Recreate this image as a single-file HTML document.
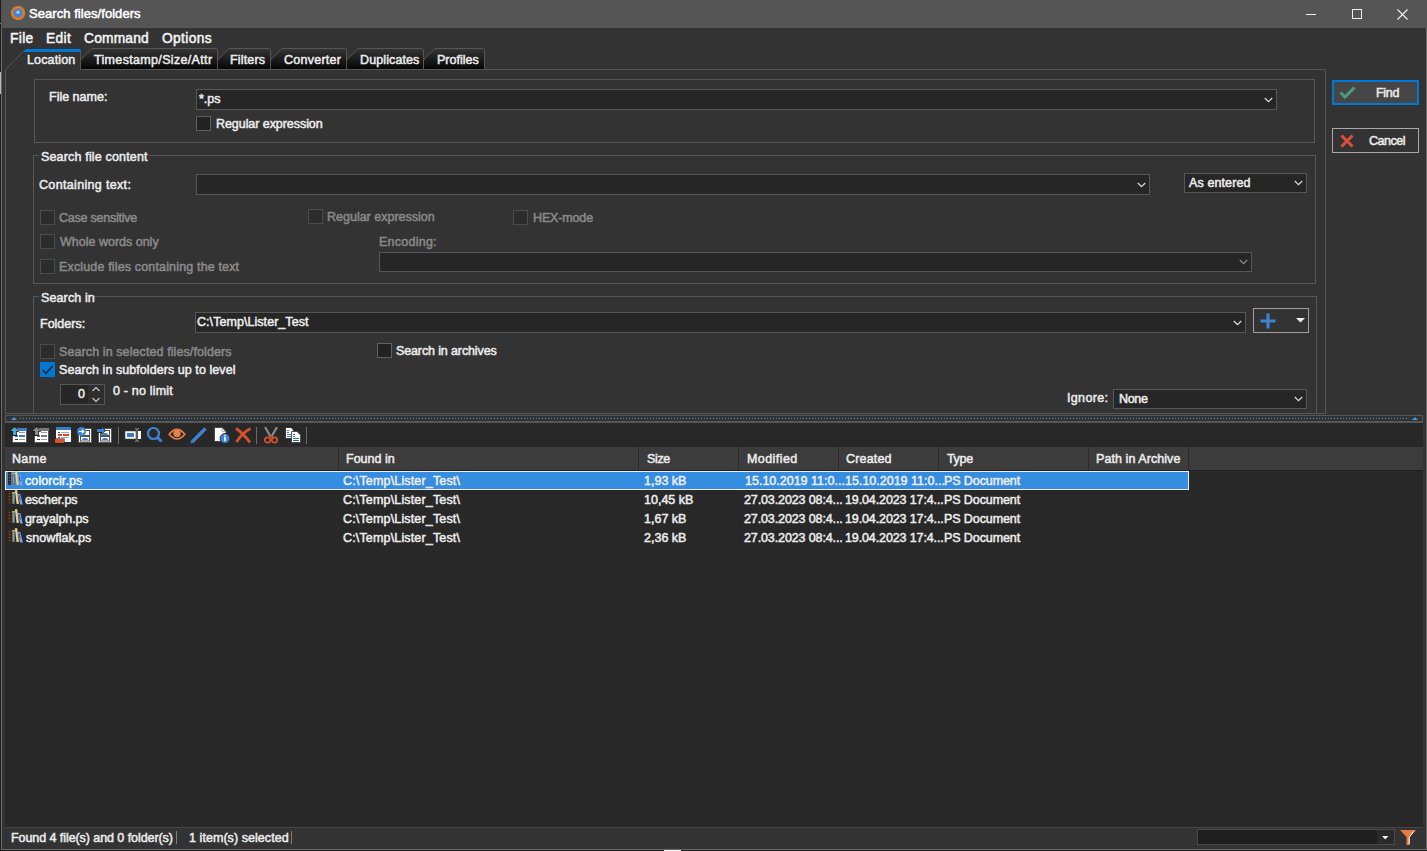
<!DOCTYPE html>
<html><head><meta charset="utf-8"><style>
html,body{margin:0;padding:0;width:1427px;height:851px;overflow:hidden;background:#1f1f1f}
div{position:absolute}
.t{white-space:nowrap;font-family:"Liberation Sans",sans-serif}
</style></head><body>
<div style="left:0px;top:0px;width:1427px;height:851px;background:#1f1f1f"></div>
<div style="left:1px;top:0px;width:1426px;height:850px;background:#6a6a6a"></div>
<div style="left:2px;top:28px;width:1424px;height:821px;background:#333333"></div>
<div style="left:1px;top:0px;width:1426px;height:28px;background:#555555"></div>
<svg style="position:absolute;left:10px;top:5px;" width="16" height="16" viewBox="0 0 16 16"><circle cx="8" cy="8" r="7.3" fill="#c8742c"/><circle cx="8" cy="8" r="5.8" fill="none" stroke="#f0b070" stroke-width="0.9" stroke-dasharray="0.9 1.6"/><circle cx="8" cy="8" r="4.2" fill="#3c84e0"/><circle cx="8" cy="7.2" r="1.6" fill="#a8ccf8"/></svg>
<div class="t" style="left:29.00px;top:7px;font-size:13px;line-height:13px;color:#ffffff;-webkit-text-stroke:0.5px #ffffff;letter-spacing:0.053px;">Search files/folders</div>
<div style="left:1306px;top:14px;width:10px;height:1px;background:#f0f0f0"></div>
<div style="left:1352px;top:9px;width:10px;height:10px;border:1px solid #f0f0f0;box-sizing:border-box"></div>
<svg style="position:absolute;left:1397px;top:9px;" width="11" height="11" viewBox="0 0 11 11"><path d="M0.5 0.5L10.5 10.5M10.5 0.5L0.5 10.5" stroke="#f0f0f0" stroke-width="1.1"/></svg>
<div class="t" style="left:10.00px;top:32px;font-size:13.8px;line-height:13.8px;color:#f4f4f4;-webkit-text-stroke:0.5px #f4f4f4;letter-spacing:0.333px;">File</div>
<div class="t" style="left:46.00px;top:32px;font-size:13.8px;line-height:13.8px;color:#f4f4f4;-webkit-text-stroke:0.5px #f4f4f4;letter-spacing:0.333px;">Edit</div>
<div class="t" style="left:84.00px;top:32px;font-size:13.8px;line-height:13.8px;color:#f4f4f4;-webkit-text-stroke:0.5px #f4f4f4;letter-spacing:0.167px;">Command</div>
<div class="t" style="left:162.00px;top:32px;font-size:13.8px;line-height:13.8px;color:#f4f4f4;-webkit-text-stroke:0.5px #f4f4f4;letter-spacing:0.333px;">Options</div>
<svg style="position:absolute;left:0;top:0" width="1427" height="851"><path d="M5.5 413.5 V69.5 L24 51 H80.5 V69.5 H1325.5 V413.5 Z" fill="#333333" stroke="#575757" stroke-width="1"/></svg>
<svg style="position:absolute;left:23px;top:49px;" width="58" height="3" viewBox="0 0 58 3"><path d="M3 0 H57.5 V3 H0 Z" fill="#0078d7"/></svg>
<svg style="position:absolute;left:0;top:0" width="1427" height="851"><defs><linearGradient id="tg" x1="0" y1="0" x2="0" y2="1"><stop offset="0" stop-color="#353535"/><stop offset="1" stop-color="#050505"/></linearGradient></defs><path d="M80.5 69.5 V60 L92.0 48.5 H215.5 Q217.5 48.5 217.5 50.5 V69.5 Z" fill="url(#tg)" stroke="#575757" stroke-width="1"/><path d="M217.5 69.5 V60 L229.0 48.5 H268.5 Q270.5 48.5 270.5 50.5 V69.5 Z" fill="url(#tg)" stroke="#575757" stroke-width="1"/><path d="M270.5 69.5 V60 L282.0 48.5 H344.5 Q346.5 48.5 346.5 50.5 V69.5 Z" fill="url(#tg)" stroke="#575757" stroke-width="1"/><path d="M346.5 69.5 V60 L358.0 48.5 H421.5 Q423.5 48.5 423.5 50.5 V69.5 Z" fill="url(#tg)" stroke="#575757" stroke-width="1"/><path d="M423.5 69.5 V60 L435.0 48.5 H482.5 Q484.5 48.5 484.5 50.5 V69.5 Z" fill="url(#tg)" stroke="#575757" stroke-width="1"/></svg>
<div class="t" style="left:27.00px;top:54px;font-size:12.5px;line-height:12.5px;color:#ececec;-webkit-text-stroke:0.5px #ececec;letter-spacing:0.143px;">Location</div>
<div class="t" style="left:94.00px;top:54px;font-size:12.5px;line-height:12.5px;color:#ececec;-webkit-text-stroke:0.5px #ececec;letter-spacing:0.333px;">Timestamp/Size/Attr</div>
<div class="t" style="left:230.00px;top:54px;font-size:12.5px;line-height:12.5px;color:#ececec;-webkit-text-stroke:0.5px #ececec;letter-spacing:0.167px;">Filters</div>
<div class="t" style="left:284.00px;top:54px;font-size:12.5px;line-height:12.5px;color:#ececec;-webkit-text-stroke:0.5px #ececec;letter-spacing:0.250px;">Converter</div>
<div class="t" style="left:360.00px;top:54px;font-size:12.5px;line-height:12.5px;color:#ececec;-webkit-text-stroke:0.5px #ececec;letter-spacing:0.111px;">Duplicates</div>
<div class="t" style="left:437.00px;top:54px;font-size:12.5px;line-height:12.5px;color:#ececec;-webkit-text-stroke:0.5px #ececec;">Profiles</div>
<div style="left:34px;top:79px;width:1281px;height:64px;border:1px solid #575757;box-sizing:border-box"></div>
<div style="left:33px;top:155px;width:1283px;height:129px;border:1px solid #575757;box-sizing:border-box"></div>
<div style="left:33px;top:296px;width:1284px;height:118px;border:1px solid #575757;box-sizing:border-box"></div>
<div style="left:39px;top:150px;width:110px;height:10px;background:#333333"></div>
<div style="left:39px;top:291px;width:54px;height:10px;background:#333333"></div>
<div class="t" style="left:49.00px;top:91px;font-size:12.5px;line-height:12.5px;color:#ececec;-webkit-text-stroke:0.5px #ececec;">File name:</div>
<div style="left:196px;top:89px;width:1081px;height:21px;background:#262626;border:1px solid #575757;box-sizing:border-box"></div>
<svg style="position:absolute;left:1263.5px;top:96.5px;" width="10" height="6" viewBox="0 0 10 6"><path d="M0.8 1 L4.5 4.7 L8.2 1" fill="none" stroke="#d8d8d8" stroke-width="1.3"/></svg>
<div class="t" style="left:199.00px;top:93px;font-size:12.5px;line-height:12.5px;color:#ececec;-webkit-text-stroke:0.5px #ececec;">*.ps</div>
<div style="left:196px;top:116px;width:15px;height:15px;background:#222222;border:1px solid #606060;box-sizing:border-box"></div>
<div class="t" style="left:216.00px;top:118px;font-size:12.5px;line-height:12.5px;color:#ececec;-webkit-text-stroke:0.5px #ececec;letter-spacing:-0.059px;">Regular expression</div>
<div class="t" style="left:41.00px;top:151px;font-size:12.5px;line-height:12.5px;color:#ececec;-webkit-text-stroke:0.5px #ececec;letter-spacing:0.167px;">Search file content</div>
<div class="t" style="left:39.00px;top:179px;font-size:12.5px;line-height:12.5px;color:#ececec;-webkit-text-stroke:0.5px #ececec;letter-spacing:0.333px;">Containing text:</div>
<div style="left:196px;top:174px;width:954px;height:21px;background:#262626;border:1px solid #575757;box-sizing:border-box"></div>
<svg style="position:absolute;left:1136.5px;top:181.5px;" width="10" height="6" viewBox="0 0 10 6"><path d="M0.8 1 L4.5 4.7 L8.2 1" fill="none" stroke="#d8d8d8" stroke-width="1.3"/></svg>
<div style="left:1184px;top:173px;width:123px;height:20px;background:#262626;border:1px solid #575757;box-sizing:border-box"></div>
<svg style="position:absolute;left:1293.5px;top:180.0px;" width="10" height="6" viewBox="0 0 10 6"><path d="M0.8 1 L4.5 4.7 L8.2 1" fill="none" stroke="#d8d8d8" stroke-width="1.3"/></svg>
<div class="t" style="left:1189.00px;top:177px;font-size:12.5px;line-height:12.5px;color:#ececec;-webkit-text-stroke:0.5px #ececec;letter-spacing:0.111px;">As entered</div>
<div style="left:40px;top:210px;width:15px;height:15px;background:#2c2c2c;border:1px solid #4c4c4c;box-sizing:border-box"></div>
<div class="t" style="left:59.00px;top:212px;font-size:12.5px;line-height:12.5px;color:#8a8a8a;-webkit-text-stroke:0.5px #8a8a8a;letter-spacing:-0.231px;">Case sensitive</div>
<div style="left:308px;top:209px;width:15px;height:15px;background:#2c2c2c;border:1px solid #4c4c4c;box-sizing:border-box"></div>
<div class="t" style="left:327.00px;top:211px;font-size:12.5px;line-height:12.5px;color:#8a8a8a;-webkit-text-stroke:0.5px #8a8a8a;">Regular expression</div>
<div style="left:513px;top:210px;width:15px;height:15px;background:#2c2c2c;border:1px solid #4c4c4c;box-sizing:border-box"></div>
<div class="t" style="left:533.00px;top:212px;font-size:12.5px;line-height:12.5px;color:#8a8a8a;-webkit-text-stroke:0.5px #8a8a8a;letter-spacing:-0.143px;">HEX-mode</div>
<div style="left:40px;top:234px;width:15px;height:15px;background:#2c2c2c;border:1px solid #4c4c4c;box-sizing:border-box"></div>
<div class="t" style="left:60.00px;top:236px;font-size:12.5px;line-height:12.5px;color:#8a8a8a;-webkit-text-stroke:0.5px #8a8a8a;">Whole words only</div>
<div class="t" style="left:379.00px;top:236px;font-size:12.5px;line-height:12.5px;color:#8a8a8a;-webkit-text-stroke:0.5px #8a8a8a;letter-spacing:0.250px;">Encoding:</div>
<div style="left:40px;top:259px;width:15px;height:15px;background:#2c2c2c;border:1px solid #4c4c4c;box-sizing:border-box"></div>
<div class="t" style="left:59.00px;top:261px;font-size:12.5px;line-height:12.5px;color:#8a8a8a;-webkit-text-stroke:0.5px #8a8a8a;letter-spacing:0.156px;">Exclude files containing the text</div>
<div style="left:379px;top:252px;width:873px;height:20px;background:#262626;border:1px solid #575757;box-sizing:border-box"></div>
<svg style="position:absolute;left:1238.5px;top:259.0px;" width="10" height="6" viewBox="0 0 10 6"><path d="M0.8 1 L4.5 4.7 L8.2 1" fill="none" stroke="#8a8a8a" stroke-width="1.3"/></svg>
<div class="t" style="left:41.00px;top:292px;font-size:12.5px;line-height:12.5px;color:#ececec;-webkit-text-stroke:0.5px #ececec;letter-spacing:0.125px;">Search in</div>
<div class="t" style="left:40.00px;top:318px;font-size:12.5px;line-height:12.5px;color:#ececec;-webkit-text-stroke:0.5px #ececec;">Folders:</div>
<div style="left:195px;top:312px;width:1051px;height:21px;background:#262626;border:1px solid #575757;box-sizing:border-box"></div>
<svg style="position:absolute;left:1232.5px;top:319.5px;" width="10" height="6" viewBox="0 0 10 6"><path d="M0.8 1 L4.5 4.7 L8.2 1" fill="none" stroke="#d8d8d8" stroke-width="1.3"/></svg>
<div class="t" style="left:197.00px;top:316px;font-size:12.5px;line-height:12.5px;color:#ececec;-webkit-text-stroke:0.5px #ececec;letter-spacing:0.056px;">C:\Temp\Lister_Test</div>
<div style="left:1253px;top:308px;width:56px;height:25px;border:1px solid #a0a0a0;box-sizing:border-box"></div>
<svg style="position:absolute;left:1259px;top:312px;" width="18" height="18" viewBox="0 0 18 18"><path d="M9 1.5 V16.5 M1.5 9 H16.5" stroke="#3f82d0" stroke-width="3.2"/></svg>
<svg style="position:absolute;left:1296px;top:318px;" width="9" height="5" viewBox="0 0 9 5"><path d="M0 0 H9 L4.5 4.5 Z" fill="#f0f0f0"/></svg>
<div style="left:40px;top:344px;width:15px;height:15px;background:#2c2c2c;border:1px solid #4c4c4c;box-sizing:border-box"></div>
<div class="t" style="left:59.00px;top:346px;font-size:12.5px;line-height:12.5px;color:#8a8a8a;-webkit-text-stroke:0.5px #8a8a8a;letter-spacing:0.097px;">Search in selected files/folders</div>
<div style="left:377px;top:343px;width:15px;height:15px;background:#222222;border:1px solid #606060;box-sizing:border-box"></div>
<div class="t" style="left:396.00px;top:345px;font-size:12.5px;line-height:12.5px;color:#ececec;-webkit-text-stroke:0.5px #ececec;letter-spacing:-0.124px;">Search in archives</div>
<div style="left:40px;top:362px;width:15px;height:15px;background:#0078d7"></div>
<svg style="position:absolute;left:40px;top:362px;" width="15" height="15" viewBox="0 0 15 15"><path d="M2.6 8.2 L5.9 11.4 L12.6 4" fill="none" stroke="#1e1e1e" stroke-width="1.5"/></svg>
<div class="t" style="left:59.00px;top:364px;font-size:12.5px;line-height:12.5px;color:#ececec;-webkit-text-stroke:0.5px #ececec;letter-spacing:0.065px;">Search in subfolders up to level</div>
<div style="left:60px;top:384px;width:45px;height:21px;background:#262626;border:1px solid #575757;box-sizing:border-box"></div>
<div style="left:88px;top:385px;width:16px;height:19px;background:#2e2e2e"></div>
<div class="t" style="left:78.00px;top:388px;font-size:12.5px;line-height:12.5px;color:#ececec;-webkit-text-stroke:0.5px #ececec;">0</div>
<svg style="position:absolute;left:91px;top:386px;" width="10" height="17" viewBox="0 0 10 17"><path d="M1.5 5 L5 1.5 L8.5 5 M1.5 12 L5 15.5 L8.5 12" fill="none" stroke="#cfcfcf" stroke-width="1.1"/></svg>
<div class="t" style="left:113.00px;top:385px;font-size:12.5px;line-height:12.5px;color:#ececec;-webkit-text-stroke:0.5px #ececec;letter-spacing:0.182px;">0 - no limit</div>
<div class="t" style="left:1067.00px;top:392px;font-size:12.5px;line-height:12.5px;color:#ececec;-webkit-text-stroke:0.5px #ececec;letter-spacing:0.333px;">Ignore:</div>
<div style="left:1113px;top:389px;width:194px;height:20px;background:#262626;border:1px solid #575757;box-sizing:border-box"></div>
<svg style="position:absolute;left:1293.5px;top:396.0px;" width="10" height="6" viewBox="0 0 10 6"><path d="M0.8 1 L4.5 4.7 L8.2 1" fill="none" stroke="#d8d8d8" stroke-width="1.3"/></svg>
<div class="t" style="left:1119.00px;top:393px;font-size:12.5px;line-height:12.5px;color:#ececec;-webkit-text-stroke:0.5px #ececec;letter-spacing:-0.333px;">None</div>
<div style="left:1332px;top:80px;width:87px;height:25px;background:#464646;border:2px solid #0078d7;box-sizing:border-box"></div>
<svg style="position:absolute;left:1339px;top:86px;" width="17" height="13" viewBox="0 0 17 13"><path d="M1.5 6.5 L6 11 L15.5 1.5" fill="none" stroke="#4c9c7a" stroke-width="3"/></svg>
<div class="t" style="left:1376.00px;top:87px;font-size:12.5px;line-height:12.5px;color:#ececec;-webkit-text-stroke:0.5px #ececec;letter-spacing:-0.300px;">Find</div>
<div style="left:1332px;top:128px;width:87px;height:25px;border:1px solid #a8a8a8;box-sizing:border-box"></div>
<svg style="position:absolute;left:1340px;top:134px;" width="14" height="14" viewBox="0 0 14 14"><path d="M1.5 1.5 L12.5 12.5 M12.5 1.5 L1.5 12.5" stroke="#d9503a" stroke-width="3"/></svg>
<div class="t" style="left:1369.00px;top:135px;font-size:12.5px;line-height:12.5px;color:#ececec;-webkit-text-stroke:0.5px #ececec;letter-spacing:-0.500px;">Cancel</div>
<div style="left:5px;top:415px;width:1418px;height:8px;border:1px solid #575757;border-bottom-width:2px;box-sizing:border-box;background:#333333"></div>
<div style="left:20px;top:418px;width:1387px;height:1px;background-image:linear-gradient(90deg,#3a9ae8 1px,transparent 1px);background-size:3px 1px"></div>
<svg style="position:absolute;left:11px;top:417px;" width="6" height="3" viewBox="0 0 6 3"><path d="M0 3 L3 0 L6 3 Z" fill="#3a9ae8"/></svg>
<svg style="position:absolute;left:1412px;top:417px;" width="6" height="3" viewBox="0 0 6 3"><path d="M0 3 L3 0 L6 3 Z" fill="#3a9ae8"/></svg>
<div style="left:5px;top:423px;width:1418px;height:24px;background:#282828"></div>
<svg style="position:absolute;left:11px;top:427px;overflow:visible" width="16" height="16"><rect x="1.5" y="1.5" width="14" height="14" fill="#fff" stroke="#555" stroke-width="1"/><rect x="6" y="1" width="10" height="3" fill="#3a7cc8"/><rect x="8" y="5" width="6" height="1" fill="#999"/><rect x="8" y="8" width="6" height="2" fill="#3a7cc8"/><rect x="4" y="8" width="3" height="2" fill="#3a7cc8"/><rect x="4" y="12" width="3" height="1" fill="#333"/><rect x="8" y="12" width="6" height="1" fill="#999"/><path d="M3.5 -0.9 L8.3 4.8 H5.8 V9 H1.2 V4.8 H-1.3 Z" fill="#151515"/><path d="M3.5 0 L7.5 4 H5 V8 H2 V4 H-0.5 Z" fill="#4aa8d0"/></svg>
<svg style="position:absolute;left:33px;top:427px;overflow:visible" width="16" height="16"><rect x="1.5" y="1.5" width="14" height="14" fill="#fff" stroke="#555" stroke-width="1"/><rect x="6" y="1" width="10" height="3" fill="#7a7a7a"/><rect x="8" y="5" width="6" height="1" fill="#999"/><rect x="8" y="8" width="6" height="2" fill="#7a7a7a"/><rect x="4" y="8" width="3" height="2" fill="#7a7a7a"/><rect x="4" y="12" width="3" height="1" fill="#333"/><rect x="8" y="12" width="6" height="1" fill="#999"/><path d="M3.5 -0.9 L8.3 4.8 H5.8 V9 H1.2 V4.8 H-1.3 Z" fill="#151515"/><path d="M3.5 0 L7.5 4 H5 V8 H2 V4 H-0.5 Z" fill="#8a8a8a"/></svg>
<svg style="position:absolute;left:55px;top:427px;" width="16" height="17" viewBox="0 0 16 17"><rect x="1" y="0" width="15" height="15" fill="#fff"/><rect x="1" y="0" width="15" height="3" fill="#3a7cc8"/><rect x="3" y="5" width="2" height="1" fill="#555"/><rect x="6" y="5" width="8" height="1" fill="#aaa"/><rect x="3" y="7" width="4" height="2" fill="#d9482a"/><rect x="8" y="7" width="6" height="2" fill="#d9482a"/><rect x="3" y="10" width="2" height="1" fill="#555"/><rect x="6" y="10" width="8" height="1" fill="#aaa"/><rect x="-0.5" y="11.5" width="10" height="5" fill="#151515"/><rect x="0" y="12" width="9" height="4" fill="#d9502e"/></svg>
<svg style="position:absolute;left:77px;top:427px;" width="16" height="16" viewBox="0 0 16 16"><rect x="1.5" y="1.5" width="13" height="14" fill="#fff" stroke="#555"/><rect x="3.5" y="3.5" width="9" height="5" fill="none" stroke="#555"/><rect x="3.5" y="9.5" width="9" height="4.5" fill="none" stroke="#555"/><path d="M5 13 A3 2 0 0 1 11 13Z" fill="#3a7cc8"/><circle cx="4.5" cy="4.5" r="4.5" fill="#3f82d0"/><path d="M2 4.5 H6.5 M4.8 2.6 L6.8 4.5 L4.8 6.4" stroke="#fff" stroke-width="1.2" fill="none"/></svg>
<svg style="position:absolute;left:97px;top:427px;" width="16" height="16" viewBox="0 0 16 16"><rect x="1.5" y="1.5" width="13" height="14" fill="#fff" stroke="#555"/><rect x="3.5" y="3.5" width="9" height="5" fill="none" stroke="#555"/><rect x="3.5" y="9.5" width="9" height="4.5" fill="none" stroke="#555"/><path d="M5 13 A3 2 0 0 1 11 13Z" fill="#3a7cc8"/><path d="M5 8 A3 2 0 0 1 11 8Z" fill="#3a7cc8"/><path d="M0 1.2 H4.2 V-1 L9 3.5 L4.2 8 V5.8 H0 Z" fill="#151515"/><path d="M0 2 H5 V0 L8 3.5 L5 7 V5 H0 Z" fill="#3f82d0"/></svg>
<div style="left:118px;top:427px;width:1px;height:17px;background:#6a6a6a"></div>
<svg style="position:absolute;left:124px;top:427px;" width="18" height="16" viewBox="0 0 18 16"><rect x="1" y="4" width="11" height="8" fill="#fff" stroke="#444" stroke-width="0.6"/><rect x="3" y="6" width="7" height="4" fill="#3a7cc8"/><rect x="14" y="4" width="3" height="8" fill="#fff"/><path d="M11 1.5 Q13 1.5 13 3 Q13 1.5 15 1.5 M13 3 V13 M11 14.5 Q13 14.5 13 13 Q13 14.5 15 14.5" fill="none" stroke="#9a9a9a" stroke-width="0.9"/></svg>
<svg style="position:absolute;left:145px;top:427px;" width="18" height="17" viewBox="0 0 18 17"><circle cx="8.5" cy="6.5" r="5.5" fill="none" stroke="#3f82d0" stroke-width="2.2"/><path d="M12.5 10.5 L16.5 14.5" stroke="#3f82d0" stroke-width="3"/></svg>
<svg style="position:absolute;left:168px;top:427px;" width="18" height="15" viewBox="0 0 18 15"><path d="M1.2 7.2 Q9 -2.6 16.8 7.2 Q9 16.8 1.2 7.2 Z" fill="none" stroke="#e8804a" stroke-width="1.7"/><circle cx="9" cy="6.6" r="3.7" fill="#e8804a"/></svg>
<svg style="position:absolute;left:190px;top:426px;" width="18" height="18" viewBox="0 0 18 18"><path d="M2 16 L15.5 2.5" stroke="#3f82d0" stroke-width="3.4"/><path d="M1 17 L3.5 14" stroke="#3f82d0" stroke-width="1.5"/></svg>
<svg style="position:absolute;left:213px;top:427px;" width="18" height="16" viewBox="0 0 18 16"><path d="M1.5 0.5 H9 L13 4.5 V14.5 H1.5 Z" fill="#fff" stroke="#333" stroke-width="0.8"/><path d="M9 0.5 V4.5 H13" fill="none" stroke="#888" stroke-width="0.6"/><circle cx="12" cy="11.5" r="5" fill="#3f82d0" stroke="#1a1a1a" stroke-width="0.8"/><rect x="11.2" y="10" width="1.6" height="4.2" fill="#fff"/><rect x="11.2" y="7.8" width="1.6" height="1.5" fill="#fff"/></svg>
<svg style="position:absolute;left:234px;top:427px;" width="18" height="17" viewBox="0 0 18 17"><path d="M2 1.5 Q9 6 16 15.5" fill="none" stroke="#d9502e" stroke-width="2.8"/><path d="M16.5 1.5 Q8 6 2.5 15" fill="none" stroke="#d9502e" stroke-width="2.8"/></svg>
<div style="left:256px;top:427px;width:1px;height:17px;background:#6a6a6a"></div>
<svg style="position:absolute;left:263px;top:427px;" width="16" height="17" viewBox="0 0 16 17"><path d="M2 0 L7.5 9.5 M14 0 L8.5 9.5" stroke="#8a8a8a" stroke-width="2.2"/><circle cx="4.5" cy="13" r="2.7" fill="none" stroke="#d9502e" stroke-width="1.7"/><circle cx="11.5" cy="13" r="2.7" fill="none" stroke="#d9502e" stroke-width="1.7"/><path d="M6.5 10.5 L8 9 L9.5 10.5" stroke="#d9502e" stroke-width="1.7" fill="none"/></svg>
<svg style="position:absolute;left:284px;top:427px;" width="18" height="17" viewBox="0 0 18 17"><path d="M1.5 0.5 H7 L9.5 3 V11.5 H1.5 Z" fill="#fff" stroke="#222" stroke-width="0.8"/><rect x="3" y="3" width="2" height="1" fill="#3a7cc8"/><rect x="3" y="5" width="2" height="1" fill="#3a7cc8"/><rect x="3" y="7" width="4" height="1" fill="#3a7cc8"/><rect x="3" y="9" width="4" height="1" fill="#3a7cc8"/><path d="M7.5 4.5 H13 L16.5 8 V15.5 H7.5 Z" fill="#fff" stroke="#444" stroke-width="0.9"/><rect x="9" y="7" width="2" height="1" fill="#2a66b0"/><rect x="9" y="9" width="2" height="1" fill="#2a66b0"/><rect x="9" y="11" width="6" height="1" fill="#2a66b0"/><rect x="9" y="13" width="6" height="1" fill="#2a66b0"/></svg>
<div style="left:306px;top:427px;width:1px;height:17px;background:#6a6a6a"></div>
<div style="left:5px;top:447px;width:1418px;height:23px;background:#3c3c3c"></div>
<div style="left:338px;top:447px;width:1px;height:23px;background:#2a2a2a"></div>
<div style="left:638px;top:447px;width:1px;height:23px;background:#2a2a2a"></div>
<div style="left:738px;top:447px;width:1px;height:23px;background:#2a2a2a"></div>
<div style="left:838px;top:447px;width:1px;height:23px;background:#2a2a2a"></div>
<div style="left:938px;top:447px;width:1px;height:23px;background:#2a2a2a"></div>
<div style="left:1088px;top:447px;width:1px;height:23px;background:#2a2a2a"></div>
<div style="left:1188px;top:447px;width:1px;height:23px;background:#2a2a2a"></div>
<div class="t" style="left:12.00px;top:453px;font-size:12.5px;line-height:12.5px;color:#ececec;-webkit-text-stroke:0.5px #ececec;letter-spacing:0.333px;">Name</div>
<div class="t" style="left:346.00px;top:453px;font-size:12.5px;line-height:12.5px;color:#ececec;-webkit-text-stroke:0.5px #ececec;">Found in</div>
<div class="t" style="left:647.00px;top:453px;font-size:12.5px;line-height:12.5px;color:#ececec;-webkit-text-stroke:0.5px #ececec;letter-spacing:-0.333px;">Size</div>
<div class="t" style="left:747.00px;top:453px;font-size:12.5px;line-height:12.5px;color:#ececec;-webkit-text-stroke:0.5px #ececec;letter-spacing:0.429px;">Modified</div>
<div class="t" style="left:846.00px;top:453px;font-size:12.5px;line-height:12.5px;color:#ececec;-webkit-text-stroke:0.5px #ececec;letter-spacing:0.167px;">Created</div>
<div class="t" style="left:947.00px;top:453px;font-size:12.5px;line-height:12.5px;color:#ececec;-webkit-text-stroke:0.5px #ececec;letter-spacing:-0.333px;">Type</div>
<div class="t" style="left:1096.00px;top:453px;font-size:12.5px;line-height:12.5px;color:#ececec;-webkit-text-stroke:0.5px #ececec;letter-spacing:0.071px;">Path in Archive</div>
<div style="left:5px;top:470px;width:1418px;height:357px;background:#282828"></div>
<div style="left:5px;top:470px;width:1418px;height:1px;background:#202020"></div>
<div style="left:5px;top:471px;width:1184px;height:19px;background:#348de0;border:1px solid #f0ece8;box-sizing:border-box"></div>
<svg style="position:absolute;left:8px;top:471px;" width="15" height="16" viewBox="0 0 15 16"><rect x="0" y="1" width="3" height="13" fill="#4a2006"/><rect x="0.8" y="3" width="1.4" height="1" fill="#9a5a20"/><rect x="0.8" y="6" width="1.4" height="1" fill="#9a5a20"/><rect x="0.8" y="9" width="1.4" height="1" fill="#9a5a20"/><rect x="0.8" y="12" width="1.4" height="1" fill="#8a4a18"/><rect x="4" y="2.5" width="3" height="11.5" fill="#5c7680"/><rect x="4" y="2" width="3" height="1.5" fill="#8ab0c0"/><rect x="5" y="5" width="1" height="7" fill="#88a0a8"/><path d="M6.8 0.2 L9.2 0.2 L11 14 L8.6 14 Z" fill="#e6c264"/><path d="M7.6 0.2 L8.4 0.2 L10 14 L9.2 14 Z" fill="#f4dc88"/><path d="M9.8 4 L12.3 4 L14.8 14.6 L12.2 14.6 Z" fill="#78a4fc"/><path d="M10.8 5 L11.6 5 L12.6 10.5 L11.8 10.5 Z" fill="#1a2ed0"/></svg>
<div class="t" style="left:25.00px;top:475px;font-size:12.5px;line-height:12.5px;color:#f4f4f4;-webkit-text-stroke:0.5px #f4f4f4;letter-spacing:0.100px;">colorcir.ps</div>
<div class="t" style="left:343.00px;top:475px;font-size:12.5px;line-height:12.5px;color:#ececec;-webkit-text-stroke:0.5px #ececec;letter-spacing:0.158px;">C:\Temp\Lister_Test\</div>
<div class="t" style="left:644.00px;top:475px;font-size:12.5px;line-height:12.5px;color:#ececec;-webkit-text-stroke:0.5px #ececec;">1,93 kB</div>
<div class="t" style="left:745.00px;top:475px;font-size:12.5px;line-height:12.5px;color:#ececec;-webkit-text-stroke:0.5px #ececec;">15.10.2019 11:0...</div>
<div class="t" style="left:845.00px;top:475px;font-size:12.5px;line-height:12.5px;color:#ececec;-webkit-text-stroke:0.5px #ececec;">15.10.2019 11:0...</div>
<div class="t" style="left:944.00px;top:475px;font-size:12.5px;line-height:12.5px;color:#ececec;-webkit-text-stroke:0.5px #ececec;letter-spacing:-0.100px;">PS Document</div>
<svg style="position:absolute;left:8px;top:490px;" width="15" height="16" viewBox="0 0 15 16"><rect x="0" y="1" width="3" height="13" fill="#4a2006"/><rect x="0.8" y="3" width="1.4" height="1" fill="#9a5a20"/><rect x="0.8" y="6" width="1.4" height="1" fill="#9a5a20"/><rect x="0.8" y="9" width="1.4" height="1" fill="#9a5a20"/><rect x="0.8" y="12" width="1.4" height="1" fill="#8a4a18"/><rect x="4" y="2.5" width="3" height="11.5" fill="#5c7680"/><rect x="4" y="2" width="3" height="1.5" fill="#8ab0c0"/><rect x="5" y="5" width="1" height="7" fill="#88a0a8"/><path d="M6.8 0.2 L9.2 0.2 L11 14 L8.6 14 Z" fill="#e6c264"/><path d="M7.6 0.2 L8.4 0.2 L10 14 L9.2 14 Z" fill="#f4dc88"/><path d="M9.8 4 L12.3 4 L14.8 14.6 L12.2 14.6 Z" fill="#78a4fc"/><path d="M10.8 5 L11.6 5 L12.6 10.5 L11.8 10.5 Z" fill="#1a2ed0"/></svg>
<div class="t" style="left:25.00px;top:494px;font-size:12.5px;line-height:12.5px;color:#ececec;-webkit-text-stroke:0.5px #ececec;letter-spacing:-0.125px;">escher.ps</div>
<div class="t" style="left:343.00px;top:494px;font-size:12.5px;line-height:12.5px;color:#ececec;-webkit-text-stroke:0.5px #ececec;letter-spacing:0.158px;">C:\Temp\Lister_Test\</div>
<div class="t" style="left:644.00px;top:494px;font-size:12.5px;line-height:12.5px;color:#ececec;-webkit-text-stroke:0.5px #ececec;">10,45 kB</div>
<div class="t" style="left:744.00px;top:494px;font-size:12.5px;line-height:12.5px;color:#ececec;-webkit-text-stroke:0.5px #ececec;letter-spacing:-0.118px;">27.03.2023 08:4...</div>
<div class="t" style="left:845.00px;top:494px;font-size:12.5px;line-height:12.5px;color:#ececec;-webkit-text-stroke:0.5px #ececec;letter-spacing:-0.118px;">19.04.2023 17:4...</div>
<div class="t" style="left:944.00px;top:494px;font-size:12.5px;line-height:12.5px;color:#ececec;-webkit-text-stroke:0.5px #ececec;letter-spacing:-0.100px;">PS Document</div>
<svg style="position:absolute;left:8px;top:509px;" width="15" height="16" viewBox="0 0 15 16"><rect x="0" y="1" width="3" height="13" fill="#4a2006"/><rect x="0.8" y="3" width="1.4" height="1" fill="#9a5a20"/><rect x="0.8" y="6" width="1.4" height="1" fill="#9a5a20"/><rect x="0.8" y="9" width="1.4" height="1" fill="#9a5a20"/><rect x="0.8" y="12" width="1.4" height="1" fill="#8a4a18"/><rect x="4" y="2.5" width="3" height="11.5" fill="#5c7680"/><rect x="4" y="2" width="3" height="1.5" fill="#8ab0c0"/><rect x="5" y="5" width="1" height="7" fill="#88a0a8"/><path d="M6.8 0.2 L9.2 0.2 L11 14 L8.6 14 Z" fill="#e6c264"/><path d="M7.6 0.2 L8.4 0.2 L10 14 L9.2 14 Z" fill="#f4dc88"/><path d="M9.8 4 L12.3 4 L14.8 14.6 L12.2 14.6 Z" fill="#78a4fc"/><path d="M10.8 5 L11.6 5 L12.6 10.5 L11.8 10.5 Z" fill="#1a2ed0"/></svg>
<div class="t" style="left:25.00px;top:513px;font-size:12.5px;line-height:12.5px;color:#ececec;-webkit-text-stroke:0.5px #ececec;letter-spacing:-0.100px;">grayalph.ps</div>
<div class="t" style="left:343.00px;top:513px;font-size:12.5px;line-height:12.5px;color:#ececec;-webkit-text-stroke:0.5px #ececec;letter-spacing:0.158px;">C:\Temp\Lister_Test\</div>
<div class="t" style="left:644.00px;top:513px;font-size:12.5px;line-height:12.5px;color:#ececec;-webkit-text-stroke:0.5px #ececec;">1,67 kB</div>
<div class="t" style="left:744.00px;top:513px;font-size:12.5px;line-height:12.5px;color:#ececec;-webkit-text-stroke:0.5px #ececec;letter-spacing:-0.118px;">27.03.2023 08:4...</div>
<div class="t" style="left:845.00px;top:513px;font-size:12.5px;line-height:12.5px;color:#ececec;-webkit-text-stroke:0.5px #ececec;letter-spacing:-0.118px;">19.04.2023 17:4...</div>
<div class="t" style="left:944.00px;top:513px;font-size:12.5px;line-height:12.5px;color:#ececec;-webkit-text-stroke:0.5px #ececec;letter-spacing:-0.100px;">PS Document</div>
<svg style="position:absolute;left:8px;top:528px;" width="15" height="16" viewBox="0 0 15 16"><rect x="0" y="1" width="3" height="13" fill="#4a2006"/><rect x="0.8" y="3" width="1.4" height="1" fill="#9a5a20"/><rect x="0.8" y="6" width="1.4" height="1" fill="#9a5a20"/><rect x="0.8" y="9" width="1.4" height="1" fill="#9a5a20"/><rect x="0.8" y="12" width="1.4" height="1" fill="#8a4a18"/><rect x="4" y="2.5" width="3" height="11.5" fill="#5c7680"/><rect x="4" y="2" width="3" height="1.5" fill="#8ab0c0"/><rect x="5" y="5" width="1" height="7" fill="#88a0a8"/><path d="M6.8 0.2 L9.2 0.2 L11 14 L8.6 14 Z" fill="#e6c264"/><path d="M7.6 0.2 L8.4 0.2 L10 14 L9.2 14 Z" fill="#f4dc88"/><path d="M9.8 4 L12.3 4 L14.8 14.6 L12.2 14.6 Z" fill="#78a4fc"/><path d="M10.8 5 L11.6 5 L12.6 10.5 L11.8 10.5 Z" fill="#1a2ed0"/></svg>
<div class="t" style="left:26.00px;top:532px;font-size:12.5px;line-height:12.5px;color:#ececec;-webkit-text-stroke:0.5px #ececec;">snowflak.ps</div>
<div class="t" style="left:343.00px;top:532px;font-size:12.5px;line-height:12.5px;color:#ececec;-webkit-text-stroke:0.5px #ececec;letter-spacing:0.158px;">C:\Temp\Lister_Test\</div>
<div class="t" style="left:644.00px;top:532px;font-size:12.5px;line-height:12.5px;color:#ececec;-webkit-text-stroke:0.5px #ececec;">2,36 kB</div>
<div class="t" style="left:744.00px;top:532px;font-size:12.5px;line-height:12.5px;color:#ececec;-webkit-text-stroke:0.5px #ececec;letter-spacing:-0.118px;">27.03.2023 08:4...</div>
<div class="t" style="left:845.00px;top:532px;font-size:12.5px;line-height:12.5px;color:#ececec;-webkit-text-stroke:0.5px #ececec;letter-spacing:-0.118px;">19.04.2023 17:4...</div>
<div class="t" style="left:944.00px;top:532px;font-size:12.5px;line-height:12.5px;color:#ececec;-webkit-text-stroke:0.5px #ececec;letter-spacing:-0.100px;">PS Document</div>
<div style="left:5px;top:827px;width:1418px;height:1px;background:#454545"></div>
<div class="t" style="left:11.00px;top:832px;font-size:12.5px;line-height:12.5px;color:#ececec;-webkit-text-stroke:0.5px #ececec;letter-spacing:-0.067px;">Found 4 file(s) and 0 folder(s)</div>
<div style="left:176px;top:831px;width:1px;height:13px;background:#7f7f7f"></div>
<div class="t" style="left:189.00px;top:832px;font-size:12.5px;line-height:12.5px;color:#ececec;-webkit-text-stroke:0.5px #ececec;letter-spacing:0.059px;">1 item(s) selected</div>
<div style="left:291px;top:831px;width:1px;height:13px;background:#7f7f7f"></div>
<div style="left:1197px;top:829px;width:198px;height:16px;background:#1e1e1e;border:1px solid #4a4a4a;box-sizing:border-box"></div>
<div style="left:1377px;top:830px;width:17px;height:14px;background:#2a2a2a"></div>
<svg style="position:absolute;left:1382px;top:836px;" width="7" height="4" viewBox="0 0 7 4"><path d="M0 0 H6.5 L3.25 3.5 Z" fill="#f0f0f0"/></svg>
<svg style="position:absolute;left:1400px;top:830px;" width="16" height="15" viewBox="0 0 16 15"><path d="M0 0 H16 L9.5 7 V15 H6.5 V7 Z" fill="#e67a4a"/><path d="M13.8 1.3 L9.2 7.3 V14" fill="none" stroke="#fff" stroke-width="1"/></svg>
<div style="left:2px;top:849px;width:1424px;height:1px;background:#6a6a6a"></div>
<div style="left:664px;top:850px;width:17px;height:1px;background:#f0f0f0"></div>
<div style="left:0px;top:72px;width:1px;height:22px;background:#b8b8b8"></div>
<div style="left:0px;top:23px;width:1px;height:1px;background:#777"></div>
</body></html>
